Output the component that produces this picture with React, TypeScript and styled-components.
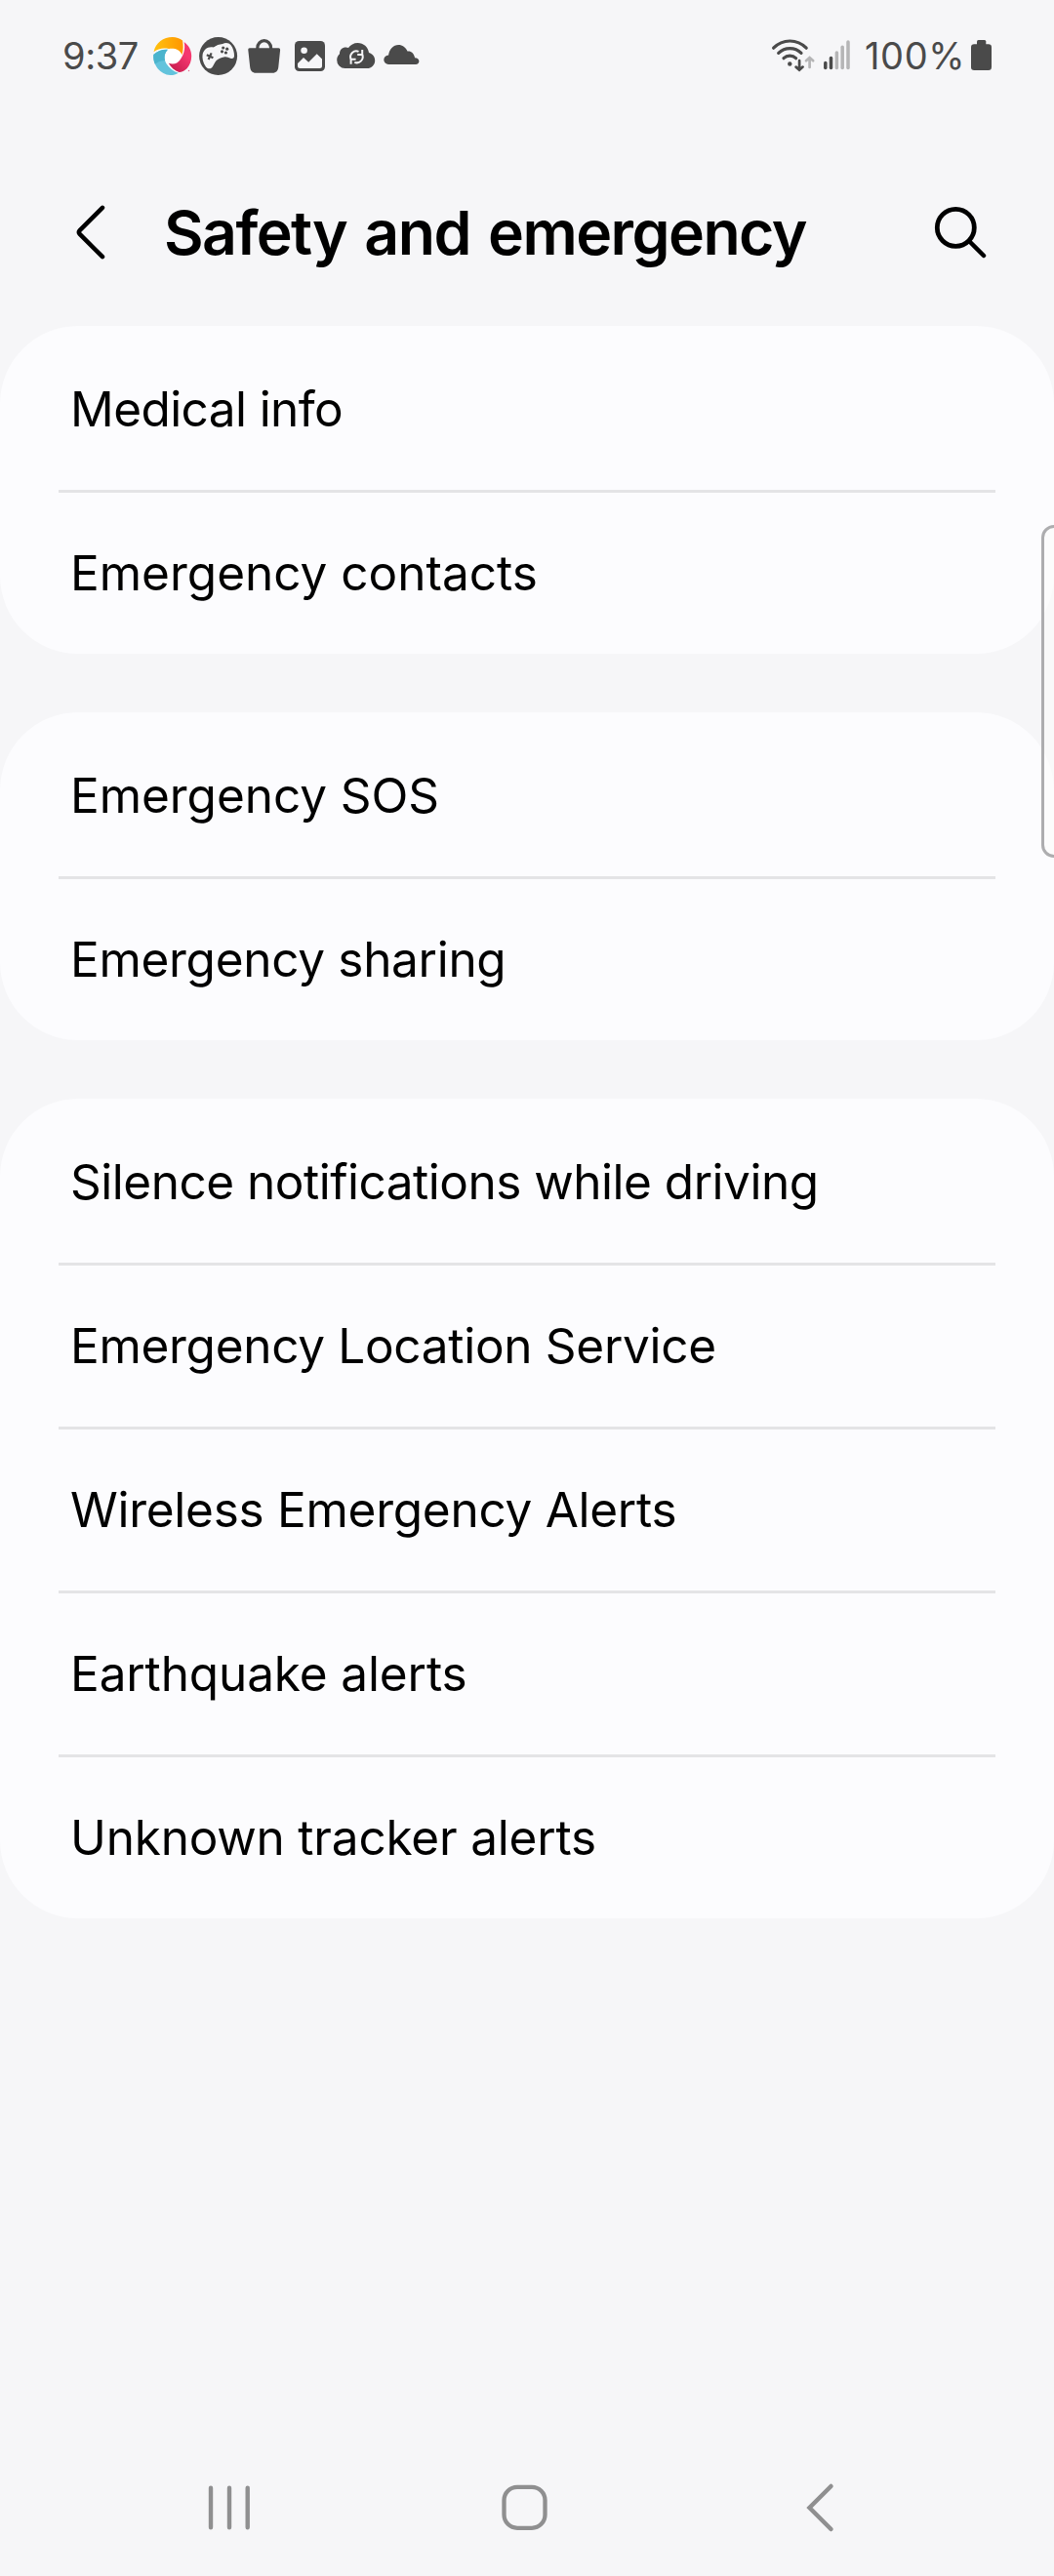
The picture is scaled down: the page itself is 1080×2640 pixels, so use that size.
import React from 'react';
import styled, { createGlobalStyle } from 'styled-components';

const INK = '#4a4a4a';
const PAGE = '#f6f6f8';

const GlobalStyle = createGlobalStyle`
  * { box-sizing: border-box; }
  body {
    margin: 0;
    background: ${PAGE};
    font-family: Inter, Roboto, sans-serif;
    color: #000;
  }
`;

const Screen = styled.div`
  position: relative;
  display: flex;
  flex-direction: column;
  width: 1080px;
  height: 2640px;
  background: ${PAGE};
  overflow: hidden;
`;

const StatusBar = styled.header`
  display: flex;
  align-items: center;
  justify-content: space-between;
  height: 116px;
  padding: 0 62px 0 64px;
  color: ${INK};
`;

const StatusGroup = styled.div`
  display: flex;
  align-items: center;
`;

const StatusText = styled.span<{ $width: number; $spacing: number }>`
  width: ${p => p.$width}px;
  padding-bottom: 2px;
  font-size: 38px;
  font-weight: 400;
  line-height: 40px;
  letter-spacing: ${p => p.$spacing}px;
  white-space: nowrap;
`;

const Notifications = styled.div`
  display: flex;
  gap: 7px;
`;

const Glyph = styled.svg`
  display: block;
  flex: none;
  overflow: visible;
`;

const Wifi = styled(Glyph)`
  margin-right: 10px;
`;

const Signal = styled(Glyph)`
  margin-right: 14px;
`;

const TitleBar = styled.div`
  display: flex;
  align-items: center;
  height: 218px;
  padding: 26px 67px 0 67px;
`;

const IconButton = styled.button`
  display: flex;
  align-items: center;
  justify-content: center;
  flex: none;
  width: 60px;
  height: 60px;
  padding: 0;
  border: 0;
  background: none;
`;

const Title = styled.h1`
  flex: 1;
  margin: 0 0 0 41px;
  font-size: 62.5px;
  font-weight: 600;
  line-height: 76px;
  letter-spacing: -1.55px;
  word-spacing: 4px;
  white-space: nowrap;
`;

const Groups = styled.main`
  display: flex;
  flex: 1;
  flex-direction: column;
  gap: 60px;
`;

const Card = styled.ul`
  margin: 0;
  padding: 0 60px;
  list-style: none;
  background: #fcfcfe;
  border-radius: 80px;
`;

const Row = styled.li<{ $spacing: number }>`
  display: flex;
  align-items: center;
  height: 168px;
  padding: 0 12px 1px;
  border-top: 3px solid #e4e4e6;
  font-size: 49.5px;
  line-height: 60px;
  letter-spacing: ${p => p.$spacing}px;
  white-space: nowrap;

  &:first-child {
    border-top-color: transparent;
  }
`;

const EdgeHandle = styled.div`
  position: absolute;
  top: 538px;
  right: -20px;
  width: 33px;
  height: 341px;
  border: 3px solid #adadaf;
  border-radius: 13px;
  background: rgba(252, 252, 250, 0.5);
`;

const NavBar = styled.nav`
  display: flex;
  align-items: center;
  justify-content: space-between;
  height: 140px;
  padding: 0 208px 0 205px;
`;

const groups: [string, number][][] = [
  [
    ['Medical info', -0.58],
    ['Emergency contacts', 0],
  ],
  [
    ['Emergency SOS', -0.05],
    ['Emergency sharing', -0.3],
  ],
  [
    ['Silence notifications while driving', -0.49],
    ['Emergency Location Service', -0.3],
    ['Wireless Emergency Alerts', -0.27],
    ['Earthquake alerts', -0.12],
    ['Unknown tracker alerts', -0.2],
  ],
];

const signalBars = [
  { x: 1.8, top: 26.5, on: true },
  { x: 7.5, top: 21.5, on: true },
  { x: 13.4, top: 16, on: false },
  { x: 19.2, top: 10.3, on: false },
  { x: 25, top: 5, on: false },
];

const PinwheelIcon = () => (
  <Glyph width="40" height="40" viewBox="0 0 40 40">
    <defs>
      <linearGradient id="amber" x1="0" y1="0" x2="1" y2="0">
        <stop offset="0" stopColor="#ffc20f" />
        <stop offset="1" stopColor="#ff9600" />
      </linearGradient>
      <linearGradient id="rose" x1="1" y1="0" x2="0.3" y2="1">
        <stop offset="0.4" stopColor="#f5386f" />
        <stop offset="1" stopColor="#c91d50" />
      </linearGradient>
    </defs>
    <circle cx="20" cy="19.5" r="17" fill="#fff" />
    <path d="M0.5 15.2C2.5 5.5 10.5 0 19.7 0c4 0 7.5 1.3 10.3 3.6 1 5 .9 10-.5 14.6-2.5-5.5-7.3-7-13.5-6.2C10.5 10.8 5 11.8 .5 15.2z" fill="url(#amber)" />
    <path d="M31.7 5c4.8 3.5 7.5 8.5 7.5 14.5 0 5-1.7 9.3-4.7 12.7-2.5 2.3-5 3.6-8 3.9-4.5-1.7-8.5-5-10.7-9.3 5.2 1.5 9.2 .2 11.8-3.6C31.3 18.5 33 12 31.7 5z" fill="url(#rose)" />
    <path d="M.3 18C4.5 14 9.5 12.3 14.9 12.7c-3.7 4.3-4.2 9-1.6 14.3 3 4.7 7.2 8 12.5 9.7-2.6 1.7-5.5 2.4-8.3 2.3C7.5 38.5-.5 29 .3 18z" fill="#63c3dc" />
    <path d="M.3 18C4.5 14 9.5 12.3 14.9 12.7c-3 3.3-4 7-2.9 11.3C6.5 24 3 27 1.7 27.5 .5 24.5 0 21.5 .3 18z" fill="#4bb4cd" />
    <circle cx="36.5" cy="34.5" r="0.7" fill="#e85b87" />
  </Glyph>
);

const GamepadIcon = () => (
  <Glyph width="40" height="40" viewBox="0 0 40 40">
    <circle cx="19.6" cy="19.5" r="19.5" fill={INK} />
    <path
      d="M6.2 12.7c2.6-2.5 5.4-2.9 8.3-2.3 1.7-.4 3-1.5 4.6-2.3 1.7-.8 3.3-.9 5-1.2 3-1.6 6.3-1.3 8.5 1.3 2.4 3 3.6 7.800 3.4 11.3-.2 2.300-1.9 3-3.9 2.2-2.3-1-4.3-2-6.7-1.3-2.7.7-5.5 1.7-7.7 3.6-2 2-2.600 5-4.3 7-1.7 2-4.6 1.7-6.500-.6C4 26.5 3 21.5 3.600 18c.3-2 1.100-3.900 2.600-5.300z"
      fill={PAGE}
    />
    <path d="M7.8 18.2l6.6 3M12.6 16.400l-3 6.6" stroke={INK} strokeWidth="2.2" />
    <g fill={INK}>
      <circle cx="24.7" cy="11" r="1.6" />
      <circle cx="28.7" cy="12.2" r="1.6" />
      <circle cx="23.5" cy="14.8" r="1.6" />
      <circle cx="27.4" cy="16" r="1.6" />
    </g>
  </Glyph>
);

const BagIcon = () => (
  <Glyph width="40" height="40" viewBox="0 0 40 40">
    <path d="M12.8 12v-.8a6.9 7.5 0 0 1 13.8 0v.8" fill="none" stroke={INK} strokeWidth="3.2" />
    <path d="M4.8 11.3h29.6c1.1 0 1.8 .8 1.7 1.9l-1.8 17.5c-.4 3.8-2.4 6-6 6H11.2c-3.6 0-5.6-2.2-6-6L3.3 13.2c-.1-1.1 .5-1.9 1.5-1.9z" fill={INK} />
  </Glyph>
);

const ImageIcon = () => (
  <Glyph width="40" height="40" viewBox="0 0 40 40">
    <rect x="4" y="4" width="31" height="31" rx="4.5" fill={INK} />
    <circle cx="13.6" cy="13.7" r="3.3" fill={PAGE} />
    <path d="M7 27l6-6 5.2 4.7 8.5-8.5L32 22.5V29.5a2.5 2.5 0 0 1-2.5 2.5h-20A2.5 2.5 0 0 1 7 29.5z" fill={PAGE} />
  </Glyph>
);

const CloudSyncIcon = () => (
  <Glyph width="40" height="40" viewBox="0 0 40 40">
    <path d="M8.5 32A8.3 8.3 0 0 1 0.2 23.5c0-2.6 1.1-4.7 2.8-6.2C2.8 13 6 10.4 9.5 10.5c1 0 1.8 .2 2.5 .5C14 8 17.5 6 21.5 6c6 0 10.7 4.2 11.5 10 3.8 1 6.2 4.2 6.2 7.9 0 4.6-3.5 8.1-8.2 8.1z" fill={INK} />
    <g fill="none" stroke={PAGE} strokeWidth="2">
      <path d="M14.5 22.5a6 6 0 0 1 8-7.6M26.3 18.2a6 6 0 0 1-8 7.6" />
      <path d="M21.2 18h5v-5M19.6 22.7h-5v5" />
    </g>
  </Glyph>
);

const CloudIcon = () => (
  <Glyph width="40" height="40" viewBox="0 0 40 40">
    <path d="M6 28a4.7 4.7 0 0 1-4.7-4.7c0-2.7 2-4.6 4.8-4.9C7 12.5 11 8 16.3 8c4 0 7.4 2.5 9.2 6.5 3.7-.5 6.7 2 7.6 6.8 2.6 .2 4.3 1.5 4.3 3.5 0 1.9-1.4 3.2-3.4 3.2z" fill={INK} />
  </Glyph>
);

export default function App() {
  return (
    <>
      <GlobalStyle />
      <Screen>
        <StatusBar>
          <StatusGroup>
            <StatusText $width={93} $spacing={-0.4}>9:37</StatusText>
            <Notifications>
              <PinwheelIcon />
              <GamepadIcon />
              <BagIcon />
              <ImageIcon />
              <CloudSyncIcon />
              <CloudIcon />
            </Notifications>
          </StatusGroup>
          <StatusGroup>
            <Wifi width="44" height="40" viewBox="0 0 44 40" fill="none" stroke={INK} strokeWidth="3.2" strokeLinecap="round">
              <path d="M2.6 11.2C12 1.6 26.8 1.6 36.2 11.2" />
              <path d="M7.7 16.4C14.3 9.9 24.6 9.9 31 16.4" />
              <path d="M13 21.7C16.6 18.3 22 18.3 25.6 21.7" />
              <circle cx="19.3" cy="27.5" r="2.2" fill={INK} stroke="none" />
              <path d="M29.1 24.2V33M25.6 30.6l3.5 3 3.5-3" strokeWidth="2.7" />
              <path d="M39.6 31V21.5M36 24.2l3.6-3.2 3.6 3.2" stroke="#b5b5b6" strokeWidth="2.7" />
            </Wifi>
            <Signal width="28" height="40" viewBox="0 0 28 40" strokeWidth="3.5" strokeLinecap="round">
              {signalBars.map(bar => (
                <path key={bar.x} d={`M${bar.x} ${bar.top}V31.5`} stroke={bar.on ? INK : '#b5b5b6'} />
              ))}
            </Signal>
            <StatusText $width={108} $spacing={0.6}>100%</StatusText>
            <Glyph width="24" height="40" viewBox="0 0 24 40" fill={INK}>
              <rect x="7" y="3" width="9.3" height="8" rx="1.5" />
              <rect x="1" y="7.3" width="21" height="26.7" rx="3.2" />
            </Glyph>
          </StatusGroup>
        </StatusBar>

        <TitleBar>
          <IconButton aria-label="Back">
            <Glyph width="60" height="60" viewBox="0 0 60 60" fill="none" stroke="#000" strokeWidth="4.5" strokeLinecap="round" strokeLinejoin="round">
              <path d="M38 4.8L14.7 28.1q-1.9 1.9 0 3.8L38 55.2" />
            </Glyph>
          </IconButton>
          <Title>Safety and emergency</Title>
          <IconButton aria-label="Search">
            <Glyph width="60" height="60" viewBox="0 0 60 60" fill="none" stroke="#000" strokeLinecap="round">
              <circle cx="26.3" cy="25.3" r="19" strokeWidth="4.8" />
              <path d="M40.5 39.5L55 54" strokeWidth="4.5" />
            </Glyph>
          </IconButton>
        </TitleBar>

        <Groups>
          {groups.map(rows => (
            <Card key={rows[0][0]}>
              {rows.map(([label, spacing]) => (
                <Row key={label} $spacing={spacing}>{label}</Row>
              ))}
            </Card>
          ))}
        </Groups>

        <NavBar>
          <IconButton aria-label="Recents">
            <Glyph width="60" height="60" viewBox="0 0 60 60" stroke="#8f8f90" strokeWidth="4.4" strokeLinecap="round">
              <path d="M11 9.7V50.3M30 9.7V50.3M48.7 9.7V50.3" />
            </Glyph>
          </IconButton>
          <IconButton aria-label="Home">
            <Glyph width="60" height="60" viewBox="0 0 60 60" fill="none" stroke="#8f8f90" strokeWidth="4.3">
              <rect x="7.5" y="8.8" width="42" height="42" rx="13.5" />
            </Glyph>
          </IconButton>
          <IconButton aria-label="Back">
            <Glyph width="60" height="60" viewBox="0 0 60 60" fill="none" stroke="#8f8f90" strokeWidth="4.5" strokeLinecap="round">
              <path d="M39.5 8L17.5 30l22 22" />
            </Glyph>
          </IconButton>
        </NavBar>
        <EdgeHandle />
      </Screen>
    </>
  );
}
